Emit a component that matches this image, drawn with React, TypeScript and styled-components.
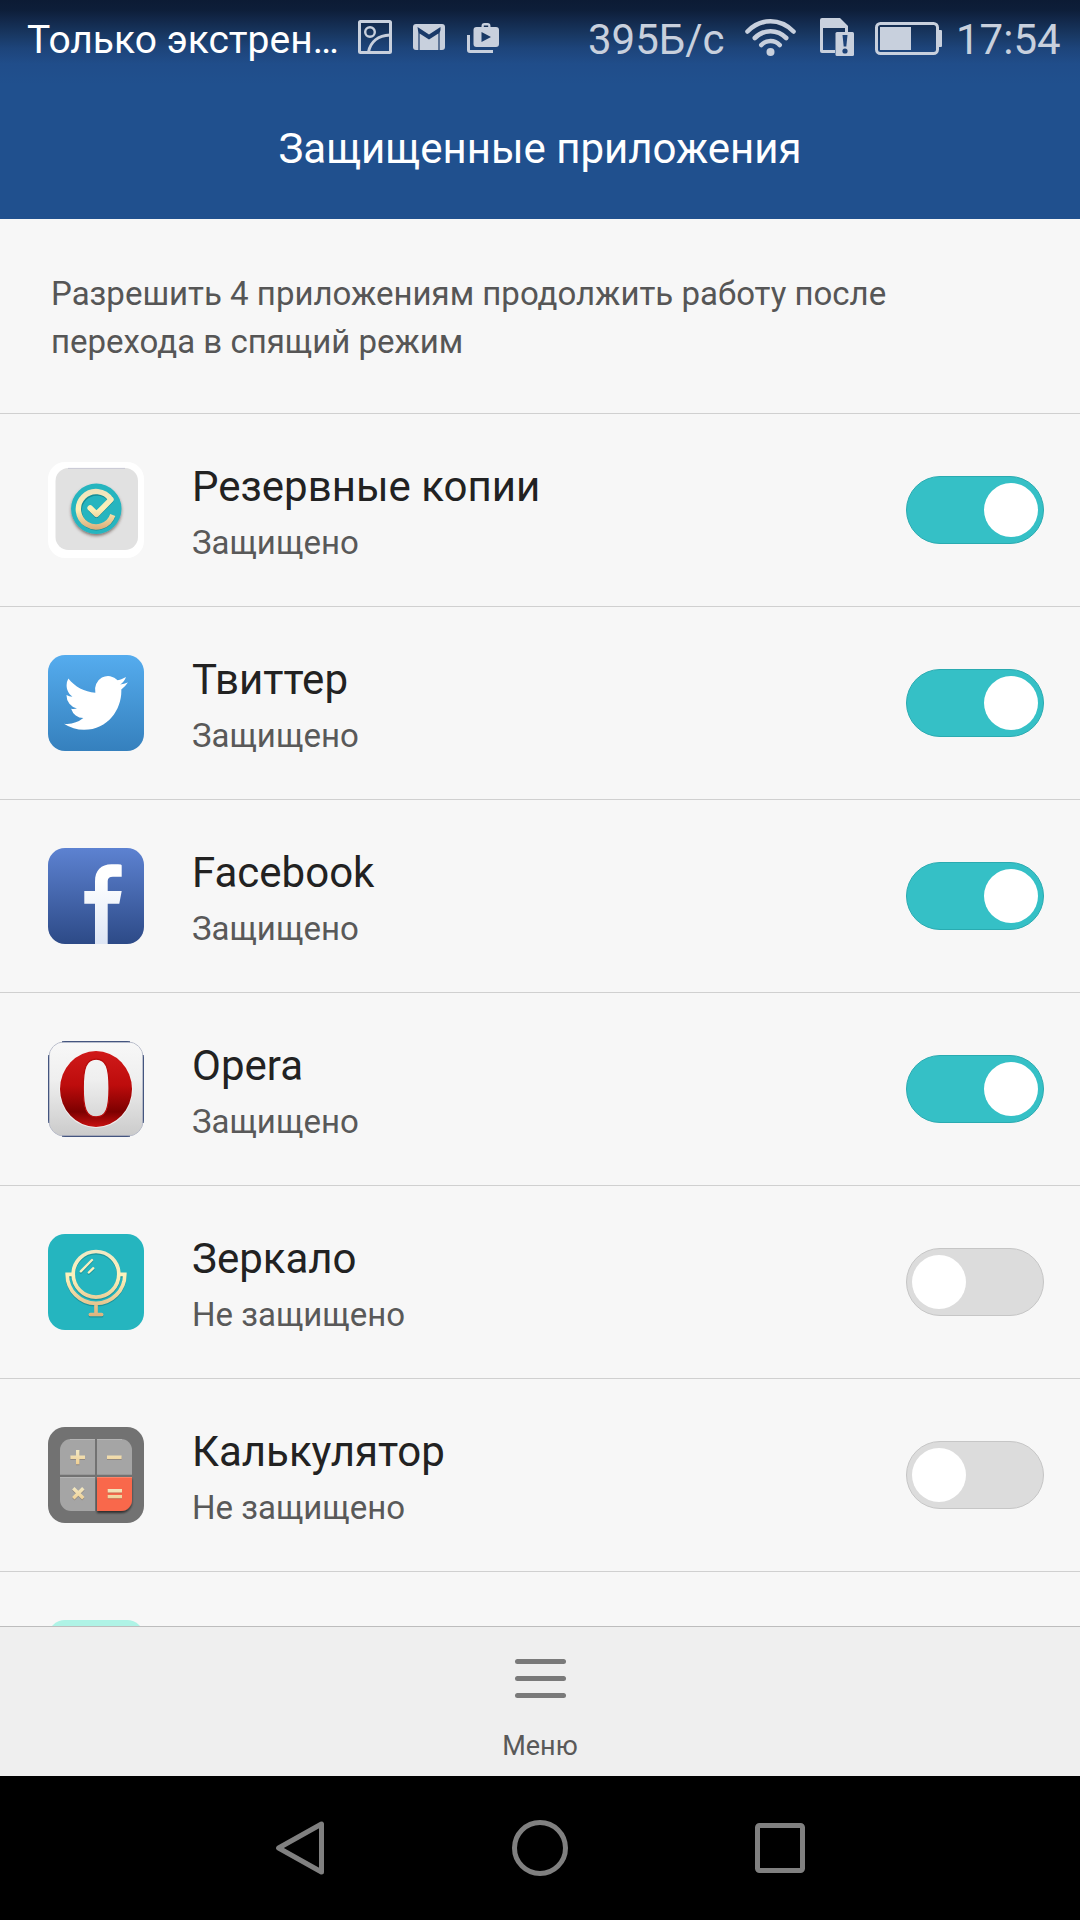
import React from "react";
import styled, { createGlobalStyle } from "styled-components";

const GlobalStyle = createGlobalStyle`
  body { margin: 0; background: #f7f7f7; }
  *, *::before, *::after { box-sizing: border-box; }
`;

const Screen = styled.div`
  display: flex;
  flex-direction: column;
  width: 1080px;
  height: 1920px;
  overflow: hidden;
  background: #f7f7f7;
  font-family: Roboto, "Noto Sans", sans-serif;
`;

const Header = styled.header`
  flex: none;
  height: 219px;
  background: linear-gradient(
    #0c1b34 0, #0d1e39 10px, #12284a 20px, #183761 34px, #1d447a 48px, #204d8a 64px, #20508e 84px
  );
`;

const StatusBar = styled.div`
  display: flex;
  align-items: center;
  height: 76px;
  padding: 0 18px 0 27px;
`;

const Operator = styled.span`
  width: 313px;
  margin-right: 18px;
  padding-top: 4px;
  color: #fff;
  font-size: 39px;
  line-height: 72px;
  white-space: nowrap;
`;

const StatusText = styled.span<{ $width: number }>`
  width: ${(p) => p.$width}px;
  margin-left: -1px;
  margin-right: 1px;
  padding-top: 4px;
  color: #c8d0dd;
  font-size: 42px;
  line-height: 72px;
  white-space: nowrap;
`;

const StatusIcon = styled.svg<{ $gap?: number }>`
  flex: none;
  display: block;
  margin-right: ${(p) => p.$gap ?? 0}px;
  color: #c8d0dd;
`;

const Spacer = styled.div`
  flex: 1;
`;

const Title = styled.h1`
  margin: 0;
  color: #fff;
  font-size: 42px;
  font-weight: 400;
  line-height: 145px;
  text-align: center;
`;

const Hint = styled.p`
  flex: none;
  height: 195px;
  margin: 0;
  padding: 51px 51px 0;
  border-bottom: 1px solid #d0d0d0;
  color: #565656;
  font-size: 33px;
  line-height: 48px;
`;

const List = styled.ul`
  flex: 1;
  min-height: 0;
  margin: 0;
  padding: 0;
  overflow: hidden;
  list-style: none;
`;

const Row = styled.li`
  display: flex;
  align-items: center;
  height: 193px;
  padding: 0 36px 0 48px;
  border-bottom: 1px solid #d0d0d0;
`;

const AppIcon = styled.svg`
  flex: none;
  display: block;
  width: 96px;
  height: 96px;
  border-radius: 17px;
`;

const Labels = styled.div`
  flex: 1;
  padding: 8px 0 0 48px;
`;

const AppName = styled.div`
  color: #222;
  font-size: 42px;
  line-height: 58px;
`;

const AppState = styled.div`
  color: #595959;
  font-size: 33px;
  line-height: 54px;
`;

const Toggle = styled.button<{ $on: boolean }>`
  flex: none;
  display: flex;
  align-items: center;
  justify-content: ${(p) => (p.$on ? "flex-end" : "flex-start")};
  width: 138px;
  height: 68px;
  padding: 0 5px;
  border: 1px solid ${(p) => (p.$on ? "#2aabb1" : "#c6c6c6")};
  border-radius: 34px;
  background: ${(p) => (p.$on ? "#35c0c6" : "#dcdcdc")};
`;

const Knob = styled.span`
  width: 54px;
  height: 54px;
  border-radius: 50%;
  background: #fff;
`;

const MenuBar = styled.div`
  flex: none;
  display: flex;
  flex-direction: column;
  align-items: center;
  height: 150px;
  padding-top: 32px;
  border-top: 1px solid #bdbdbd;
  background: #efefef;
`;

const MenuIcon = styled.div`
  display: flex;
  flex-direction: column;
  gap: 12px;
  width: 51px;
`;

const MenuLine = styled.span`
  height: 5px;
  border-radius: 2.5px;
  background: #7a7a7a;
`;

const MenuLabel = styled.span`
  margin-top: 30px;
  color: #595959;
  font-size: 27px;
  line-height: 36px;
`;

const NavBar = styled.nav`
  flex: none;
  display: flex;
  justify-content: center;
  align-items: center;
  gap: 180px;
  height: 144px;
  background: #000;
`;

const NavIcon = styled.svg`
  display: block;
  width: 60px;
  height: 60px;
  fill: none;
  stroke: #808080;
  stroke-width: 5;
  stroke-linejoin: round;
`;

const Gradient = ({ id, from, to, y1 = 0, y2 = 96 }: { id: string; from: string; to: string; y1?: number; y2?: number }) => (
  <linearGradient id={id} gradientUnits="userSpaceOnUse" x1="0" x2="0" y1={y1} y2={y2}>
    <stop offset="0" stopColor={from} />
    <stop offset="1" stopColor={to} />
  </linearGradient>
);

const BackupIcon = () => (
  <AppIcon viewBox="0 0 96 96">
    <defs>
      <linearGradient id="bk" gradientUnits="userSpaceOnUse" x1="0" x2="0" y1="27" y2="67">
        <stop offset="0" stopColor="#efe2bd" />
        <stop offset=".5" stopColor="#fdf1b8" />
        <stop offset="1" stopColor="#dcae7b" />
      </linearGradient>
      <filter id="bks" x="-20%" y="-20%" width="140%" height="150%">
        <feDropShadow dx="0" dy="2" stdDeviation="1.5" floodColor="#3a2a20" floodOpacity=".55" />
      </filter>
    </defs>
    <rect width="96" height="96" fill="#fff" />
    <rect x="7.5" y="6" width="82.5" height="82" rx="13" fill="#e1e1e1" />
    <path d="M20 6.4H77" stroke="#c3c3d2" strokeWidth=".8" />
    <circle cx="48.3" cy="46.7" r="25.2" fill="#25b5bf" filter="url(#bks)" />
    <path
      d="M42.2 46L48.5 52.3L62.9 37.6A17.3 17.3 0 1 0 65 53"
      transform="translate(0 1)" fill="none" stroke="#178d96" strokeWidth="5.2" strokeLinejoin="round"
    />
    <path d="M42.2 46L48.5 52.3L62.9 37.6" fill="none" stroke="url(#bk)" strokeWidth="5.6" strokeLinecap="round" strokeLinejoin="round" />
    <path d="M62.9 37.6A17.7 17.7 0 1 0 64.8 53" fill="none" stroke="url(#bk)" strokeWidth="5.4" />
  </AppIcon>
);

const TwitterIcon = () => (
  <AppIcon viewBox="0 0 96 96">
    <defs><Gradient id="tw" from="#55acee" to="#3580bd" /></defs>
    <rect width="96" height="96" fill="url(#tw)" />
    <path
      transform="translate(16 14.8) scale(2.66 2.76)"
      fill="#fff"
      d="M23.953 4.57a10 10 0 01-2.825.775 4.958 4.958 0 002.163-2.723c-.951.555-2.005.959-3.127 1.184a4.92 4.92 0 00-8.384 4.482C7.69 8.095 4.067 6.13 1.64 3.162a4.822 4.822 0 00-.666 2.475c0 1.71.87 3.213 2.188 4.096a4.904 4.904 0 01-2.228-.616v.06a4.923 4.923 0 003.946 4.827 4.996 4.996 0 01-2.212.085 4.936 4.936 0 004.604 3.417 9.867 9.867 0 01-6.102 2.105c-.39 0-.779-.023-1.17-.067a13.995 13.995 0 007.557 2.209c9.053 0 13.998-7.496 13.998-13.985 0-.21 0-.42-.015-.63A9.935 9.935 0 0024 4.59z"
    />
  </AppIcon>
);

const FacebookIcon = () => (
  <AppIcon viewBox="0 0 96 96">
    <defs>
      <Gradient id="fb" from="#5d82d1" to="#2d4a87" />
      <Gradient id="fbf" from="#ffffff" to="#dee6f5" y1={30} />
    </defs>
    <rect width="96" height="96" fill="url(#fb)" />
    <path
      fill="url(#fbf)"
      d="M47 96V55.7H36.3V43H47V33.500C47 22.500 53 16.300 63.500 16.300H70Q73.700 16.300 73.700 17.500V28.700H65Q59.700 28.700 59.700 33V43H73.700L71.300 55.700H59.700V96Z"
    />
  </AppIcon>
);

const OperaIcon = () => (
  <AppIcon viewBox="0 0 96 96">
    <defs>
      <linearGradient id="opb" gradientUnits="userSpaceOnUse" x1="0" x2="0" y1="0" y2="96">
        <stop offset="0" stopColor="#f8f8f8" />
        <stop offset=".4" stopColor="#efefef" />
        <stop offset="1" stopColor="#cacaca" />
      </linearGradient>
      <linearGradient id="opr" x1="0" x2="0" y1="0" y2="1">
        <stop offset="0" stopColor="#d01a1a" />
        <stop offset=".45" stopColor="#bd0c0c" />
        <stop offset=".8" stopColor="#7d0000" />
        <stop offset="1" stopColor="#c81010" />
      </linearGradient>
    </defs>
    <rect x=".9" y=".9" width="94.2" height="94.2" rx="15" fill="url(#opb)" stroke="#b9bdcb" strokeWidth="1" />
    <path d="M14 .6H82M14 95.4H82M.6 14V82M95.4 14V82" stroke="#44557f" strokeWidth="1.2" />
    <ellipse cx="48" cy="48.4" rx="36.6" ry="38.6" fill="#fff" opacity=".6" />
    <ellipse cx="48" cy="48" rx="36" ry="38" fill="url(#opr)" />
    <path
      d="M48.2 18.200C58.200 18.200 61 27 61 47S58.200 75.800 48.200 75.800S35.300 67 35.300 47S38.200 18.200 48.200 18.200Z"
      fill="url(#opb)" stroke="#b80b0b" strokeWidth="1.2"
    />
  </AppIcon>
);

const MirrorShape = ({ stroke }: { stroke: string }) => (
  <g fill="none" stroke={stroke} strokeWidth="3.7">
    <circle cx="48" cy="40.3" r="22.8" />
    <path d="M25.4 40.4H19.2A28.8 29 0 0 0 76.8 40.4H70.6M48 69.5V80" />
    <path d="M42.4 80.5H53.6" strokeLinecap="round" />
    <path d="M32.8 37.4L44 26M40.8 38.5L45.3 34.2" strokeWidth="2.3" strokeLinecap="round" />
  </g>
);

const MirrorIcon = () => (
  <AppIcon viewBox="0 0 96 96">
    <defs>
      <linearGradient id="mi" gradientUnits="userSpaceOnUse" x1="0" x2="0" y1="16" y2="82">
        <stop offset="0" stopColor="#efe8c4" />
        <stop offset=".4" stopColor="#fcf2bb" />
        <stop offset="1" stopColor="#ddb37e" />
      </linearGradient>
    </defs>
    <rect width="96" height="96" fill="#25b5bf" />
    <g transform="translate(0 1.2)" opacity=".5"><MirrorShape stroke="#12757c" /></g>
    <MirrorShape stroke="url(#mi)" />
  </AppIcon>
);

const CalculatorIcon = () => (
  <AppIcon viewBox="0 0 96 96">
    <defs>
      <Gradient id="c1" from="#f3e9c4" to="#efcf93" y1={23} y2={37} />
      <Gradient id="c2" from="#f3e9c4" to="#efcf93" y1={60} y2={73} />
      <filter id="cs" x="-20%" y="-20%" width="140%" height="150%">
        <feDropShadow dx="0" dy="2" stdDeviation="1.3" floodColor="#000" floodOpacity=".6" />
      </filter>
    </defs>
    <rect width="96" height="96" fill="#727272" />
    <path d="M47 12V47.7H12V23A11 11 0 0 1 23 12Z" fill="#a5a5a5" />
    <path d="M49 12V47.7H84V23A11 11 0 0 0 73 12Z" fill="#a5a5a5" />
    <path d="M47 84V50H12V73A11 11 0 0 0 23 84Z" fill="#a5a5a5" />
    <path d="M49 84V50H84V73A11 11 0 0 1 73 84Z" fill="#f9674c" filter="url(#cs)" />
    <path d="M22 12.5H47M49 12.5H74M12 50.5H47" stroke="#b5b5b5" />
    <path d="M49 50.5H84" stroke="#ff8468" />
    <g fill="none" stroke="#6d5a48" strokeWidth="3.4" opacity=".35" transform="translate(0 1)">
      <path d="M22.4 30.3H37M29.7 23V37.2M59 30.3H73.6M25.3 61.3L35.3 71.3M35.3 61.3L25.3 71.3M59.7 63.8H74M59.7 69.6H74" />
    </g>
    <path d="M22.4 30.3H37M29.7 23V37.2M59 30.3H73.6" stroke="url(#c1)" strokeWidth="3.4" />
    <path d="M25.3 61.3L35.3 71.3M35.3 61.3L25.3 71.3M59.7 63.8H74M59.7 69.6H74" stroke="url(#c2)" strokeWidth="3.4" />
  </AppIcon>
);

const MintIcon = () => (
  <AppIcon viewBox="0 0 96 96"><rect width="96" height="96" fill="#aff3e6" /></AppIcon>
);

const apps = [
  { name: "Резервные копии", on: true, Icon: BackupIcon },
  { name: "Твиттер", on: true, Icon: TwitterIcon },
  { name: "Facebook", on: true, Icon: FacebookIcon },
  { name: "Opera", on: true, Icon: OperaIcon },
  { name: "Зеркало", on: false, Icon: MirrorIcon },
  { name: "Калькулятор", on: false, Icon: CalculatorIcon },
];

const GalleryGlyph = () => (
  <StatusIcon $gap={21} width="34" height="76" viewBox="0 0 34 76" fill="none" stroke="currentColor">
    <rect x="1.5" y="21.5" width="31" height="31" rx="1" strokeWidth="3" />
    <circle cx="12" cy="32" r="4.8" strokeWidth="2.4" />
    <path d="M10.5 52C12.5 42 20 35.5 32 35" strokeWidth="3" />
  </StatusIcon>
);

const MailGlyph = () => (
  <StatusIcon $gap={22} width="32" height="76" viewBox="0 0 32 76">
    <rect y="24" width="32" height="26" rx="3" fill="currentColor" />
    <path d="M4.5 27L16 34.5L27.5 27V30L26.6 33V50H25.4V33.5L16 39.5L6.600 33.5V50H5.400V33Z" fill="#1a3a69" />
  </StatusIcon>
);

const PlayGlyph = () => (
  <StatusIcon width="32" height="76" viewBox="0 0 32 76">
    <path
      fill="currentColor" fillRule="evenodd"
      d="M9 27H14.5V26Q14.5 23 17.5 23H20.5Q23.5 23 23.5 26V27H29Q32 27 32 30V44Q32 47 29 47H9.500Q6.500 47 6.500 44V30Q6.500 27 9.500 27ZM16.800 27H21.200V25.400H16.800ZM14.500 32V42L24 37Z"
    />
    <path fill="currentColor" d="M0 35H3V50H26V53H3Q0 53 0 50Z" />
  </StatusIcon>
);

const WifiGlyph = () => (
  <StatusIcon $gap={24} width="51" height="76" viewBox="0 0 51 76" fill="none" stroke="currentColor" strokeWidth="4.6" strokeLinecap="round">
    <path d="M2.500 31.500Q12.500 21.300 25.500 21.300T48.500 31.500" />
    <path d="M9.800 38Q16.500 31.300 25.500 31.300T41.200 38" />
    <path d="M16.300 45Q20 41 25.500 41T34.700 45" />
    <circle cx="25.500" cy="52" r="4" fill="currentColor" stroke="none" />
  </StatusIcon>
);

const SimGlyph = () => (
  <StatusIcon $gap={21} width="34" height="76" viewBox="0 0 34 76">
    <path fill="currentColor" fillRule="evenodd" d="M2 18H20L28 26V32H25V28H3V50H15V53H2Q0 53 0 51V20Q0 18 2 18Z" />
    <rect x="15.500" y="32" width="18.500" height="24" rx="1.500" fill="currentColor" />
    <path d="M22.500 35H27.500L26.300 46.500H23.700Z" fill="#1d4378" />
    <circle cx="25" cy="51" r="2.600" fill="#1d4378" />
  </StatusIcon>
);

const BatteryGlyph = () => (
  <StatusIcon $gap={15} width="67" height="76" viewBox="0 0 67 76">
    <rect x="1.500" y="23.500" width="61" height="30" rx="4" fill="none" stroke="currentColor" strokeWidth="3" />
    <rect x="5" y="27" width="31" height="23" fill="currentColor" />
    <path d="M64 30H66Q67 30 67 31V46Q67 47 66 47H64Z" fill="currentColor" />
  </StatusIcon>
);

export default function App() {
  return (
    <Screen>
      <GlobalStyle />
      <Header>
        <StatusBar>
          <Operator>Только экстрен…</Operator>
          <GalleryGlyph />
          <MailGlyph />
          <PlayGlyph />
          <Spacer />
          <StatusText $width={156}>395Б/с</StatusText>
          <WifiGlyph />
          <SimGlyph />
          <BatteryGlyph />
          <StatusText $width={105}>17:54</StatusText>
        </StatusBar>
        <Title>Защищенные приложения</Title>
      </Header>
      <Hint>
        Разрешить 4 приложениям продолжить работу после
        <br />
        перехода в спящий режим
      </Hint>
      <List>
        {apps.map(({ name, on, Icon }) => (
          <Row key={name}>
            <Icon />
            <Labels>
              <AppName>{name}</AppName>
              <AppState>{on ? "Защищено" : "Не защищено"}</AppState>
            </Labels>
            <Toggle $on={on} role="switch" aria-checked={on} aria-label={name}>
              <Knob />
            </Toggle>
          </Row>
        ))}
        <Row>
          <MintIcon />
        </Row>
      </List>
      <MenuBar>
        <MenuIcon>
          <MenuLine />
          <MenuLine />
          <MenuLine />
        </MenuIcon>
        <MenuLabel>Меню</MenuLabel>
      </MenuBar>
      <NavBar>
        <NavIcon viewBox="0 0 60 60">
          <path d="M51.500 6V54L8.600 30Z" />
        </NavIcon>
        <NavIcon viewBox="0 0 60 60">
          <circle cx="30" cy="30" r="25.500" />
        </NavIcon>
        <NavIcon viewBox="0 0 60 60">
          <rect x="7.500" y="7.500" width="45" height="45" rx="2" />
        </NavIcon>
      </NavBar>
    </Screen>
  );
}
